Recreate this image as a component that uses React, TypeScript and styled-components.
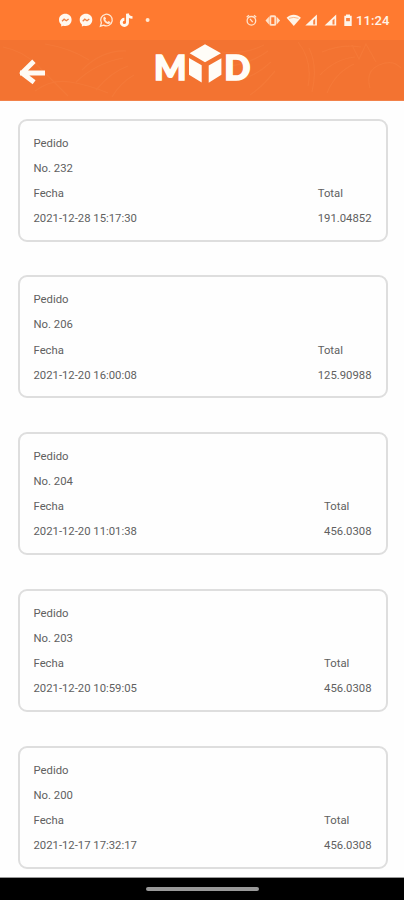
import React from 'react';
import styled, { createGlobalStyle } from 'styled-components';

const GlobalStyle = createGlobalStyle`
  * { box-sizing: border-box; }
  body { margin: 0; background: #fefefe; font-family: Roboto, "Liberation Sans", sans-serif; }
`;

const Screen = styled.div`
  display: flex;
  flex-direction: column;
  width: 404px;
  height: 900px;
  overflow: hidden;
  background: #fefefe;
`;

const StatusBar = styled.div`
  display: flex;
  align-items: center;
  justify-content: space-between;
  flex: none;
  height: 40px;
  padding: 0 14px 0 58px;
  background: #ff7a30;
  color: #fff4e8;
`;

const StatusIcons = styled.svg`
  display: block;
  flex: none;
`;

const StatusRight = styled.div`
  display: flex;
  align-items: center;
  gap: 4px;
`;

const Clock = styled.span`
  width: 34px;
  padding-top: 1px;
  font-size: 13px;
  line-height: 16px;
  font-weight: 500;
  letter-spacing: 0.1px;
  white-space: nowrap;
`;

const Header = styled.header`
  display: grid;
  flex: none;
  height: 61px;
  background: #f37331;
  border-bottom: 1px solid #f2824a;
`;

const HeaderArt = styled.svg`
  display: block;
`;

const Orders = styled.main`
  display: flex;
  flex: 1;
  flex-direction: column;
  gap: 33.8px;
  min-height: 0;
  padding: 17.6px 16.5px 0 17.5px;
  overflow: hidden;
`;

const Card = styled.article`
  display: flex;
  flex: none;
  flex-direction: column;
  height: 123px;
  padding: 10px 14px 0;
  border: 2px solid #dedede;
  border-radius: 9px;
  background: #fefefe;
`;

const Line = styled.div`
  height: 25.1px;
  color: #606060;
  font-size: 11.3px;
  line-height: 25.1px;
  white-space: nowrap;
`;

const Details = styled.div`
  display: flex;
  justify-content: space-between;
`;

const Column = styled.div`
  display: flex;
  flex-direction: column;
`;

const NavBar = styled.footer`
  display: flex;
  flex: none;
  justify-content: center;
  height: 22px;
  padding: 9px 0 0 1px;
  background: #000;
  box-shadow: 0 -1px 0 #999;
  z-index: 1;
`;

const HomePill = styled.div`
  width: 113px;
  height: 4px;
  border-radius: 2px;
  background: #999;
`;

const orders = [
  { id: 232, date: '2021-12-28 15:17:30', total: '191.04852' },
  { id: 206, date: '2021-12-20 16:00:08', total: '125.90988' },
  { id: 204, date: '2021-12-20 11:01:38', total: '456.0308' },
  { id: 203, date: '2021-12-20 10:59:05', total: '456.0308' },
  { id: 200, date: '2021-12-17 17:32:17', total: '456.0308' },
];

function Notifications() {
  return (
    <StatusIcons width="94" height="16" viewBox="58 12 94 16" fill="#fff8ef">
      {[65.3, 86].map((x) => (
        <g key={x} transform={`translate(${x} 20)`}>
          <path d="M0-6.2C-3.6-6.2-6.3-3.7-6.3-.2c0 2 .8 3.6 2.2 4.7v2l2-.8c4.5 1.3 8.4-1.5 8.4-5.9C6.3-3.7 3.6-6.2 0-6.2Z" />
          <path d="M-3.3 1.2-1.2-.8 1 .8 3.3-1.1" fill="none" stroke="#ef8245" strokeWidth="1.3" />
        </g>
      ))}
      <path d="m100.4 26.2 1-3.4a5.8 5.8 0 1 1 2.3 2.3Z" fill="none" stroke="#ffe8d3" strokeWidth="1.3" />
      <path d="m103.4 17.5 1.3-1 1.4 2.1-.8 1.2c.5 1 1.2 1.6 2.2 2.1l1.1-.9 2 1.3c-.5 1.6-1.8 2.1-3.4 1.4-2.4-1-4.3-3.4-3.8-6.2Z" fill="#ffe8d3" />
      <path d="M127.5 13.7v8.7a3.1 3.1 0 1 1-3.1-3.1" fill="none" stroke="#fff8ef" strokeWidth="2.9" />
      <path d="M127.5 13.7c.5 2.4 2.5 3.7 5 3.8" fill="none" stroke="#fff8ef" strokeWidth="2.7" />
      <circle cx="147.6" cy="20" r="2" fill="#ffe8d3" />
    </StatusIcons>
  );
}

function SystemIcons() {
  return (
    <StatusIcons width="108" height="16" viewBox="244 12 108 16" fill="#fff4e8">
      <g fill="none" stroke="#ffe3cc" strokeWidth="1.3">
        <circle cx="251.4" cy="20.8" r="4.3" />
        <path d="m246.7 17.2 2.2-2m7.3 2-2.2-2M250 18.8l2.7 3.4" />
      </g>
      <rect x="270.3" y="16.3" width="5" height="8.6" rx="1" fill="none" stroke="#ffe3cc" strokeWidth="1.9" />
      <path d="m268.9 16.8-3.4 3.8 3.4 3.8Zm7.8 0 3.4 3.8-3.4 3.8Z" fill="#ffe3cc" />
      <path d="M286.6 17.7c4.1-4.1 10.2-4.1 14.3 0l-7.1 8.2Z" />
      <path d="M289 18.3q4.7-1.8 9.5 0" fill="none" stroke="#ffad76" strokeWidth=".9" />
      {[305.3, 324.6].map((x) => (
        <g key={x} transform={`translate(${x} 0)`}>
          <path d="M0 25.6 11.6 14.6v11Z" />
          <path d="M7.9 20.6 9.9 18.4v6H7.9Z" fill="#fb8241" />
        </g>
      ))}
      <path d="M346 14.5h4v1.3h1.7V26h-7.4V15.8h1.7Z" />
      <path d="M346.1 18h3.8v3.2h-3.8Z" fill="#fb8241" />
    </StatusIcons>
  );
}

function Branding() {
  return (
    <HeaderArt width="404" height="60" viewBox="0 40 404 60">
      <g fill="none" stroke="#fa8849" strokeWidth="1.2" opacity=".28">
        <path d="M3 47q20 4 34 18t31 31M35 91q16-12 35-9t38 11M82 70q20-20 44-19M76 82q20-19 47-24M96 90q15-18 32-24M112 97q8-14 22-22M45 44q25 4 44 16" />
        <path d="M222 52q21 3 42-7M229 66q21-2 39-15M239 80q17-4 32-18M250 95q12-8 25-24M298 42q15 19 10 44M309 48q9 18 3 44M322 52q19-8 39-5M320 75q15-16 35-18M327 93q8-20 27-29M352 45l7 14 7-15 10 18M370 88q-5-17 9-23t22 3" />
      </g>
      <path d="M42.6 73H22.4M32.2 63 22 73l10.2 7.8" fill="none" stroke="#fffaf4" strokeWidth="4.8" strokeLinecap="square" strokeLinejoin="round" />
      <g fill="#fffdf8" stroke="#fffdf8">
        <text x="154" y="80" fontFamily="Lato, sans-serif" fontWeight="900" fontSize="34.8" strokeWidth="1.6" textLength="32.5" lengthAdjust="spacingAndGlyphs">M</text>
        <path stroke="none" d="m205 44.3 16 9-16 9-15.4-9ZM189 58l12.7 7.3v17.2L189 74.8Zm19.7 7.6 12.7-7.3v16.5l-12.7 7.9Z" />
        <text x="224.3" y="80" fontFamily="Lato, sans-serif" fontWeight="900" fontSize="34.8" strokeWidth="1.6" textLength="26.2" lengthAdjust="spacingAndGlyphs">D</text>
      </g>
    </HeaderArt>
  );
}

export default function App() {
  return (
    <>
      <GlobalStyle />
      <Screen>
        <StatusBar>
          <Notifications />
          <StatusRight>
            <SystemIcons />
            <Clock>11:24</Clock>
          </StatusRight>
        </StatusBar>
        <Header><Branding /></Header>
        <Orders>
          {orders.map((order) => (
            <Card key={order.id}>
              <Line>Pedido</Line>
              <Line>No. {order.id}</Line>
              <Details>
                <Column>
                  <Line>Fecha</Line>
                  <Line>{order.date}</Line>
                </Column>
                <Column>
                  <Line>Total</Line>
                  <Line>{order.total}</Line>
                </Column>
              </Details>
            </Card>
          ))}
        </Orders>
        <NavBar><HomePill /></NavBar>
      </Screen>
    </>
  );
}
